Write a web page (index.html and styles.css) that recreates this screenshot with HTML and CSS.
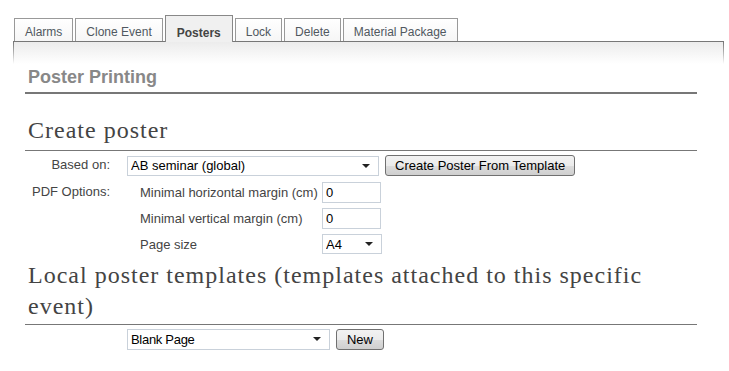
FILE: index.html
```html
<!DOCTYPE html>
<html lang="en">
<head>
    <meta charset="UTF-8">
    <title>Posters</title>
    <link rel="stylesheet" href="styles.css">
</head>
<body>
    <!-- TABS -->
    <div class="tabs">
        <a class="tab">Alarms</a>
        <a class="tab">Clone Event</a>
        <a class="tab selected">Posters</a>
        <a class="tab">Lock</a>
        <a class="tab">Delete</a>
        <a class="tab">Material Package</a>
    </div>
    <div class="panel">
        <h2 class="titulo">Poster Printing</h2>

        <!-- CREATE POSTER -->
        <h3 class="seccion">Create poster</h3>
        <div class="form">
            <span class="etiqueta">Based on:</span>
            <div class="fila">
                <span class="combo ancho"><select><option>AB seminar (global)</option></select></span>
                <button type="button" class="boton">Create Poster From Template</button>
            </div>
            <span class="etiqueta">PDF Options:</span>
            <div class="opciones">
                <span>Minimal horizontal margin (cm)</span>
                <input type="text" class="campo" value="0">
                <span>Minimal vertical margin (cm)</span>
                <input type="text" class="campo" value="0">
                <span>Page size</span>
                <span class="combo chico"><select><option>A4</option></select></span>
            </div>
        </div>

        <!-- LOCAL TEMPLATES -->
        <h3 class="seccion local">Local poster templates (templates attached to this specific event)</h3>
        <div class="form">
            <span class="etiqueta"></span>
            <div class="fila">
                <span class="combo medio"><select class="angosto"><option>Blank Page</option></select></span>
                <button type="button" class="boton nuevo">New</button>
            </div>
        </div>
    </div>
</body>
</html>
```

FILE: styles.css
```css
* {
    box-sizing: border-box;
}
body {
    margin: 0;
    background: white;
    font-family: "Liberation Sans", Arial, sans-serif;
    font-size: 13px;
    color: #444;
}
.tabs {
    display: flex;
    align-items: flex-end;
    gap: 2px;
    padding: 14px 0 0 14px;
    height: 41px;
}
.tab {
    display: block;
    height: 23px;
    padding: 6px 10px 0 10px;
    border: 1px solid #999;
    border-bottom: none;
    background: linear-gradient(#fff, #f6f6f6);
    font-size: 12px;
    color: #505860;
    position: relative;
    z-index: 1;
}
.tab.selected {
    height: 27px;
    padding-top: 10px;
    border-color: #888;
    background: #f0f0f0;
    font-weight: bold;
    color: #444;
    margin-bottom: -1px;
    padding-left: 11px;
    padding-right: 11px;
}
.panel {
    margin-left: 13px;
    width: 711px;
    border-top: 1px solid #777;
    padding: 25px 27px 20px 12px;
    background:
        linear-gradient(#777, rgba(119, 119, 119, 0)) left top / 1px 22px no-repeat,
        linear-gradient(#777, rgba(119, 119, 119, 0)) right top / 1px 22px no-repeat,
        linear-gradient(#ececec, #fff) left top / 100% 22px no-repeat;
}
.titulo {
    margin: 0;
    padding: 0 0 4px 3px;
    font-size: 18px;
    line-height: 21px;
    color: #888;
    border-bottom: 2px solid #777;
}
.seccion {
    margin: 21px 0 0 0;
    padding: 0 0 4px 3px;
    font-family: "Liberation Serif", "Times New Roman", serif;
    font-weight: normal;
    font-size: 24px;
    line-height: 31px;
    letter-spacing: 1px;
    color: #444;
    border-bottom: 1px solid #777;
}
.seccion.local {
    margin-top: 6px;
    padding-bottom: 2px;
}
.form {
    display: grid;
    grid-template-columns: 85px auto;
    column-gap: 17px;
    row-gap: 6px;
    padding-top: 4px;
}
.etiqueta {
    text-align: right;
    padding-top: 2px;
}
.fila {
    display: flex;
    gap: 6px;
    align-items: center;
}
.opciones {
    display: grid;
    grid-template-columns: 182px 60px;
    row-gap: 5px;
    padding-left: 13px;
    align-items: center;
}
.campo {
    width: 59px;
    height: 21px;
    border: 1px solid #c9d1da;
    padding: 1px 3px;
    font-family: inherit;
    font-size: 13px;
    color: black;
}
.combo {
    position: relative;
    display: inline-block;
}
.combo::after {
    content: "";
    position: absolute;
    right: 9px;
    top: 8px;
    border-left: 4px solid transparent;
    border-right: 4px solid transparent;
    border-top: 4px solid #222;
}
.combo select {
    -webkit-appearance: none;
    appearance: none;
    display: block;
    width: 100%;
    height: 20px;
    border: 1px solid #c9d1da;
    border-radius: 0;
    background: white;
    padding: 0 3px;
    font-family: inherit;
    font-size: 13px;
    color: black;
}
.ancho {
    width: 252px;
}
.chico {
    width: 60px;
}
.medio {
    width: 203px;
}
.medio select {
    height: 21px;
}
.angosto {
    letter-spacing: -0.3px;
}
.boton {
    height: 21px;
    padding: 0 9px;
    border: 1px solid #707070;
    border-radius: 3px;
    background: linear-gradient(#f2f2f2 0%, #ebebeb 50%, #dddddd 51%, #cfcfcf 100%);
    font-family: inherit;
    font-size: 13px;
    color: black;
}
.nuevo {
    width: 48px;
    padding: 0;
}
```
